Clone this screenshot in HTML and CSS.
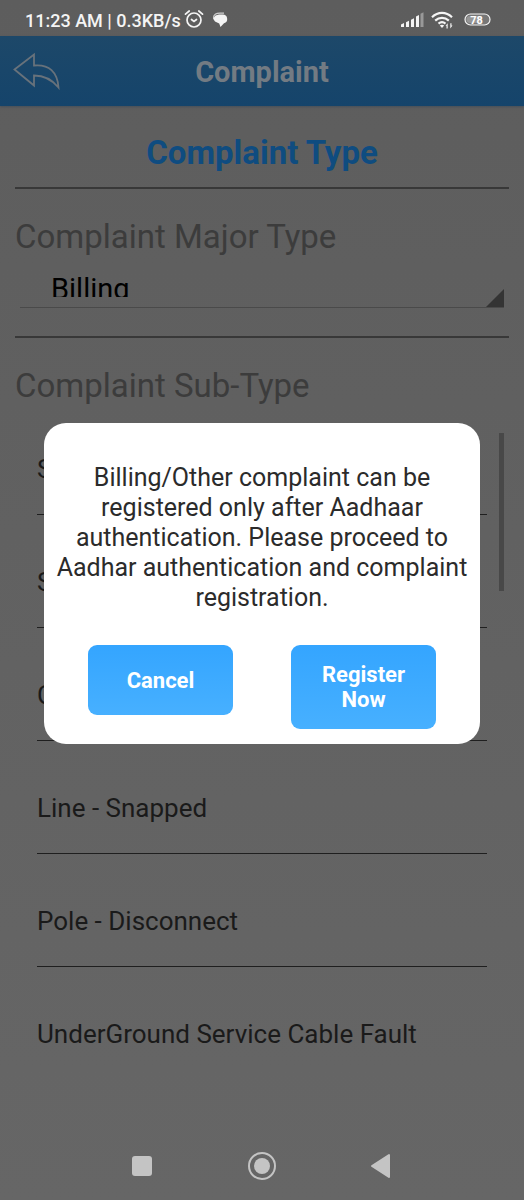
FILE: index.html
```html
<!DOCTYPE html>
<html lang="en">
<head>
<meta charset="utf-8">
<meta name="viewport" content="width=device-width, initial-scale=1">
<title>Complaint</title>
<link rel="stylesheet" href="styles.css">
</head>
<body>
<div class="screen">
  <div class="status">
    <span class="status-time">11:23 AM | 0.3KB/s</span>
    <svg class="status-alarm" width="20" height="20" viewBox="0 0 20 20" fill="none" stroke="#f4f4f4" stroke-width="1.7" stroke-linecap="round" aria-hidden="true">
      <circle cx="10" cy="10" r="7"/><path d="M7.500 9.500l2.500 2 2.500-2M1.500 4.200L5.200 1M18.500 4.200L14.800 1"/>
    </svg>
    <svg width="16" height="16" viewBox="0 0 16 16" aria-hidden="true">
      <path fill="#f4f4f4" d="M7 2.500h3.500a4.500 4.500 0 0 1 1.500 8.800L8.500 15 7.200 11.600 3 9.500 1 6.500 3.500 3.500z"/>
      <path fill="none" stroke="#cfcfcf" stroke-width="1.200" d="M1.500 6C1.500 2.500 4 1.200 8 1.200h4"/>
    </svg>
    <span class="status-right">
      <svg width="24" height="16" viewBox="0 0 24 16" aria-hidden="true">
        <g fill="#f4f4f4"><path d="M0 12.500l3-1.500v4H0z"/><path d="M5 10.200l3-1.500V15H5z"/><path d="M10 7.700l3-1.500V15h-3z"/><path d="M15 4.500l3-1.500v12h-3z"/></g>
        <path fill="#999" d="M19.500 1.800l3-1.500V15h-3z"/>
      </svg>
      <svg width="22" height="18" viewBox="0 0 22 18" fill="none" stroke="#f4f4f4" stroke-width="2.200" aria-hidden="true">
        <path d="M1 6.300C7 .500 15 .500 21 6.300M4.200 9.600c4-3.600 9.600-3.600 13.600 0M7.500 12.600c2.200-1.800 4.800-1.800 7 0"/>
        <path fill="#f4f4f4" stroke="none" d="M8.800 14.500q2.200-1.700 4.400 0L11 17zM14.500 14.800l2.200-2.600V17.500h-1.200v-2.700zM21.500 14.500l-2.200 3v-5.300h1.200v2.300z"/>
      </svg>
      <svg class="status-battery" width="27" height="14" viewBox="0 0 27 14" aria-hidden="true">
        <rect x="1" y="1" width="25" height="11" rx="5.500" fill="#777" stroke="#f4f4f4" stroke-width="1.200"/>
        <path d="M6 3h12v7H6a3.500 3.500 0 0 1 0-7z" fill="#969696"/>
        <text class="battery-text" x="12.500" y="10.500" text-anchor="middle">78</text>
      </svg>
    </span>
  </div>

  <header class="appbar">
    <button class="back" type="button" aria-label="Back">
      <svg width="48" height="38" viewBox="0 0 48 38" fill="none" stroke="#68727b" stroke-width="1.800" aria-hidden="true">
        <path d="M1.500 17.500L21 2.500v11C36 12 44.500 20 45.500 35.500 39 27.500 31 23.500 21 23.500v10z"/>
      </svg>
    </button>
    <h1 class="appbar-title">Complaint</h1>
    <span></span>
  </header>

  <main class="content">
    <h2 class="title">Complaint Type</h2>
    <section class="field">
      <label class="label" for="major">Complaint Major Type</label>
      <div class="spinner">
        <div class="spinner-clip">
          <select class="spinner-select" id="major"><option>Billing</option></select>
        </div>
        <svg width="18" height="18" viewBox="0 0 18 18" aria-hidden="true"><path d="M18 0v18H0z" fill="#343434"/></svg>
      </div>
    </section>
    <section class="subtype">
      <h3 class="label">Complaint Sub-Type</h3>
      <div class="list-box">
        <ul class="list">
          <li class="row">S</li>
          <li class="row">S</li>
          <li class="row">C</li>
          <li class="row">Line - Snapped</li>
          <li class="row">Pole - Disconnect</li>
          <li class="row">UnderGround Service Cable Fault</li>
        </ul>
        <div class="scrollbar"></div>
      </div>
    </section>
  </main>

  <nav class="navbar" aria-label="System">
    <button type="button" aria-label="Recent apps"><svg width="30" height="30" viewBox="0 0 30 30"><rect x="5" y="5" width="20" height="20" rx="3" fill="#c4c4c4"/></svg></button>
    <button type="button" aria-label="Home"><svg width="30" height="30" viewBox="0 0 30 30"><circle cx="15" cy="15" r="13" fill="none" stroke="#c4c4c4" stroke-width="2"/><circle cx="15" cy="15" r="8" fill="#c4c4c4"/></svg></button>
    <button type="button" aria-label="Go back"><svg width="30" height="30" viewBox="0 0 30 30"><path d="M5 15L22 4v22z" fill="#c4c4c4" stroke="#c4c4c4" stroke-width="2" stroke-linejoin="round"/></svg></button>
  </nav>
</div>

<div class="overlay">
  <div class="dialog" role="dialog" aria-modal="true" aria-labelledby="message">
    <p class="message" id="message">Billing/Other complaint can be registered only after Aadhaar authentication. Please proceed to Aadhar authentication and complaint registration.</p>
    <div class="actions">
      <button class="action" type="button">Cancel</button>
      <button class="action" type="button">Register Now</button>
    </div>
  </div>
</div>
</body>
</html>
```
FILE: styles.css
```css
* {
  box-sizing: border-box;
}

body,
h1,
h2,
h3,
p,
ul {
  margin: 0;
  padding: 0;
}

body {
  font-family: Roboto, "Noto Sans", sans-serif;
  color: #1a1a1a;
}

button {
  margin: 0;
  padding: 0;
  border: 0;
  background: none;
  font: inherit;
}

svg {
  display: block;
}

.screen {
  display: flex;
  flex-direction: column;
  min-height: 100vh;
  background: linear-gradient(#5d5d5d, #666666);
}

.status {
  display: flex;
  align-items: center;
  height: 36px;
  padding: 4px 33px 0 25px;
  color: #f4f4f4;
}

.status-time {
  font-size: 18px;
  font-weight: 500;
}

.status-alarm {
  margin: 0 8px 0 3px;
}

.status-right {
  display: flex;
  align-items: center;
  gap: 6px;
  margin-left: auto;
}

.status-battery {
  margin-left: 5px;
}

.battery-text {
  font-size: 11px;
  font-weight: 700;
  fill: #ffffff;
}

.appbar {
  display: grid;
  grid-template-columns: 48px 1fr 48px;
  align-items: center;
  height: 70px;
  padding: 0 13px;
  background: linear-gradient(#1d4869, #15446b);
  box-shadow: 0 1px 2px #45505a;
}

.appbar-title {
  padding-top: 2px;
  color: #737b83;
  font-size: 29px;
  font-weight: 700;
  text-align: center;
}

.content {
  flex: 1;
  padding: 0 15px;
}

.title {
  padding: 24px 0 12px;
  border-bottom: 2px solid #383838;
  color: #0f4c80;
  font-size: 33px;
  line-height: 45px;
  font-weight: 700;
  text-align: center;
}

.field {
  padding: 28px 0 28px;
  border-bottom: 2px solid #383838;
}

.label {
  display: block;
  color: #3c3c3c;
  font-size: 33px;
  line-height: 40px;
  font-weight: 400;
}

.spinner {
  display: flex;
  align-items: flex-end;
  height: 51px;
  margin: 0 5px;
  padding-left: 31px;
  border-bottom: 1px solid #4a4a4a;
}

.spinner-clip {
  flex: 1;
  height: 25px;
  margin-bottom: 10px;
  overflow: hidden;
}

.spinner-select {
  display: block;
  width: 100%;
  height: 34px;
  padding: 0;
  border: 0;
  appearance: none;
  background: none;
  color: #000000;
  font-family: inherit;
  font-size: 29px;
}

.subtype {
  padding-top: 28px;
}

.list-box {
  display: flex;
  justify-content: space-between;
  margin: 27px 5px 0 22px;
}

.list {
  flex: 1;
  list-style: none;
}

.row {
  padding: 52px 0 30px;
  border-bottom: 1px solid #1f1f1f;
  font-size: 26px;
  line-height: 30px;
}

.row:first-child {
  padding-top: 21px;
}

.row:last-child {
  border-bottom: 0;
}

.scrollbar {
  width: 5px;
  height: 158px;
  margin-left: 12px;
  background: #484848;
}

.navbar {
  display: flex;
  justify-content: center;
  gap: 90px;
  padding: 19px 0;
}

.overlay {
  position: fixed;
  inset: 0;
  display: flex;
  align-items: center;
  justify-content: center;
  padding: 0 44px 33px;
}

.dialog {
  width: 100%;
  padding: 40px 8px 15px;
  border-radius: 22px;
  background: #ffffff;
}

.message {
  color: #2b2b2b;
  font-size: 25px;
  line-height: 30px;
  text-align: center;
}

.actions {
  display: flex;
  align-items: flex-start;
  justify-content: space-between;
  gap: 58px;
  padding: 32px 36px 0;
}

.action {
  flex: 1;
  min-height: 70px;
  padding: 17px 24px;
  border-radius: 9px;
  background: linear-gradient(#34a5ff, #47b0ff);
  color: #ffffff;
  font-size: 22px;
  font-weight: 700;
  line-height: 25px;
}
```
